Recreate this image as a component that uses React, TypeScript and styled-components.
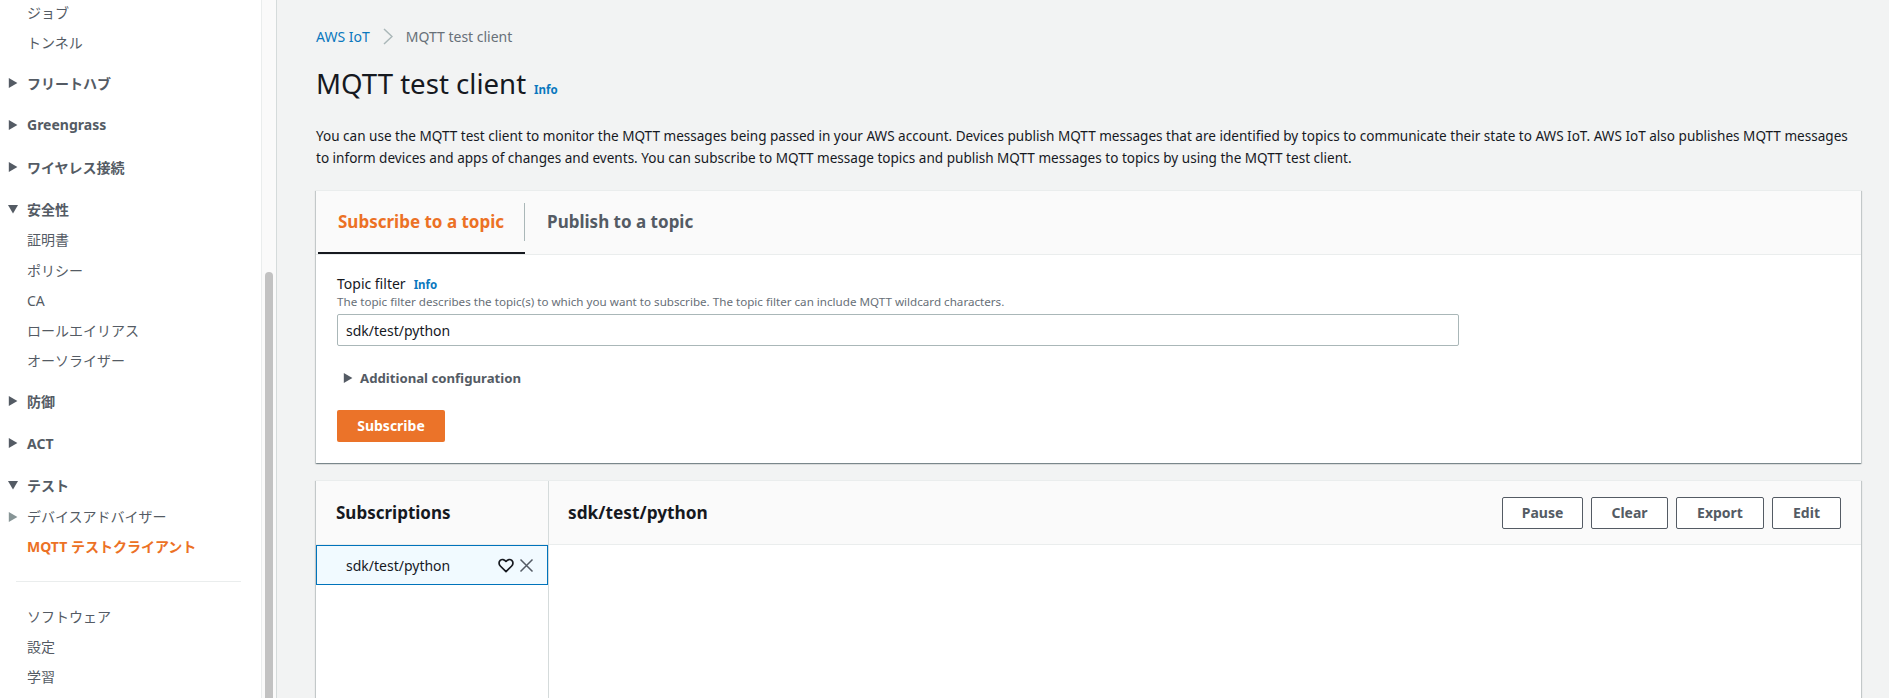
import React from "react";
import styled, { createGlobalStyle } from "styled-components";

const GlobalStyle = createGlobalStyle`
  html, body, #root {
    height: 100%;
  }
  body {
    margin: 0;
    overflow: hidden;
    background: #f2f3f3;
    color: #16191f;
    font-family: "Noto Sans", "Noto Sans CJK JP", sans-serif;
    font-size: 14px;
  }
`;

const Caret = ({ open, color = "#545b64" }: { open?: boolean; color?: string }) => (
  <CaretSvg viewBox="0 0 10 10">
    <path d={open ? "M0 1h10L5 9.400z" : "M.8 0v10L9.400 5z"} fill={color} />
  </CaretSvg>
);

const HeartIcon = () => (
  <svg width="16" height="15" viewBox="0 0 16 15" fill="none">
    <path
      d="M8 13.6 2.3 8C.6 6.300.7 3.800 2.200 2.400 3.800 1 6.300 1.200 8 3.400 9.700 1.200 12.200 1 13.800 2.400 15.300 3.800 15.400 6.300 13.700 8z"
      stroke="#16191f"
      strokeWidth="1.700"
      strokeLinejoin="round"
    />
  </svg>
);

const CloseIcon = () => (
  <svg width="15" height="15" viewBox="0 0 15 15" fill="none">
    <path d="M1.500 1.500 13.500 13.500M13.500 1.500 1.500 13.500" stroke="#545b64" strokeWidth="1.500" />
  </svg>
);

const ChevronIcon = () => (
  <svg width="10" height="17" viewBox="0 0 10 17" fill="none">
    <path d="M1 1l8 7.500-8 7.500" stroke="#aab7b8" strokeWidth="1.500" />
  </svg>
);

const App = () => {
  return (
    <>
      <GlobalStyle />
      <Page>
        <Sidebar>
          <NavList>
            <NavItem>ジョブ</NavItem>
            <NavItem>トンネル</NavItem>
            <NavSection>
              <Caret />
              フリートハブ
            </NavSection>
            <NavSection>
              <Caret />
              Greengrass
            </NavSection>
            <NavSection>
              <Caret />
              ワイヤレス接続
            </NavSection>
            <NavSection>
              <Caret open />
              安全性
            </NavSection>
            <NavItem>証明書</NavItem>
            <NavItem>ポリシー</NavItem>
            <NavItem>CA</NavItem>
            <NavItem>ロールエイリアス</NavItem>
            <NavItem>オーソライザー</NavItem>
            <NavSection>
              <Caret />
              防御
            </NavSection>
            <NavSection>
              <Caret />
              ACT
            </NavSection>
            <NavSection>
              <Caret open />
              テスト
            </NavSection>
            <NavItem>
              <Caret color="#879596" />
              デバイスアドバイザー
            </NavItem>
            <NavItem $active>MQTT テストクライアント</NavItem>
            <NavDivider />
            <NavItem>ソフトウェア</NavItem>
            <NavItem>設定</NavItem>
            <NavItem>学習</NavItem>
          </NavList>
        </Sidebar>
        <ScrollTrack>
          <ScrollThumb />
        </ScrollTrack>
        <Main>
          <Breadcrumbs>
            <CrumbLink>AWS IoT</CrumbLink>
            <ChevronIcon />
            <span>MQTT test client</span>
          </Breadcrumbs>
          <TitleRow>
            <Title>MQTT test client</Title>
            <InfoLink>Info</InfoLink>
          </TitleRow>
          <Description>
            You can use the MQTT test client to monitor the MQTT messages being passed in your AWS
            account. Devices publish MQTT messages that are identified by topics to communicate their
            state to AWS IoT. AWS IoT also publishes MQTT messages to inform devices and apps of
            changes and events. You can subscribe to MQTT message topics and publish MQTT messages to
            topics by using the MQTT test client.
          </Description>

          <Card>
            <TabBar>
              <Tab $active>Subscribe to a topic</Tab>
              <Tab>Publish to a topic</Tab>
            </TabBar>
            <FormBody>
              <LabelRow>
                <FieldLabel>Topic filter</FieldLabel>
                <InfoLink>Info</InfoLink>
              </LabelRow>
              <Hint>
                The topic filter describes the topic(s) to which you want to subscribe. The topic
                filter can include MQTT wildcard characters.
              </Hint>
              <TopicInput defaultValue="sdk/test/python" />
              <Expander>
                <Caret />
                Additional configuration
              </Expander>
              <PrimaryButton>Subscribe</PrimaryButton>
            </FormBody>
          </Card>

          <ResultCard>
            <SubscriptionsPane>
              <PaneHeader>
                <PaneTitle>Subscriptions</PaneTitle>
              </PaneHeader>
              <SubscriptionRow>
                <SubscriptionName>sdk/test/python</SubscriptionName>
                <HeartIcon />
                <CloseIcon />
              </SubscriptionRow>
            </SubscriptionsPane>
            <MessagesPane>
              <PaneHeader>
                <PaneTitle>sdk/test/python</PaneTitle>
                <ButtonRow>
                  <OutlineButton $width={81}>Pause</OutlineButton>
                  <OutlineButton $width={77}>Clear</OutlineButton>
                  <OutlineButton $width={88}>Export</OutlineButton>
                  <OutlineButton $width={69}>Edit</OutlineButton>
                </ButtonRow>
              </PaneHeader>
            </MessagesPane>
          </ResultCard>
        </Main>
      </Page>
    </>
  );
};

export default App;

const Page = styled.div`
  display: flex;
  height: 100%;
  overflow: hidden;
`;

const Sidebar = styled.nav`
  width: 261px;
  flex-shrink: 0;
  background: #fff;
  overflow: hidden;
`;

const NavList = styled.div`
  display: flex;
  flex-direction: column;
  margin-top: -2.400px;
`;

const CaretSvg = styled.svg`
  width: 10px;
  height: 10px;
  flex-shrink: 0;
`;

const NavItem = styled.div<{ $active?: boolean }>`
  position: relative;
  height: 30.200px;
  line-height: 30px;
  padding-left: 27px;
  color: ${(props) => (props.$active ? "#ec7125" : "#545b64")};
  font-weight: ${(props) => (props.$active ? 700 : 400)};

  ${CaretSvg} {
    position: absolute;
    left: 8px;
    top: 10px;
  }
`;

const NavSection = styled.div`
  display: flex;
  align-items: center;
  gap: 9px;
  height: 30.200px;
  margin-top: 11.800px;
  padding-left: 8px;
  color: #545b64;
  font-weight: 700;

  ${NavItem} + & {
    margin-top: 9.800px;
  }

  & + ${NavItem} {
    margin-top: 1.500px;
  }
`;

const NavDivider = styled.div`
  height: 1px;
  margin: 18.500px 20px 20px 16px;
  background: #eaeded;
`;

const ScrollTrack = styled.div`
  width: 16px;
  flex-shrink: 0;
  display: flex;
  justify-content: center;
  padding-top: 272px;
  box-sizing: border-box;
  background: #fafafa;
  border-left: 1px solid #eaeded;
  border-right: 1px solid #d5dbdb;
`;

const ScrollThumb = styled.div`
  width: 8px;
  height: 100%;
  background: #c2c2c2;
  border-radius: 4px 4px 0 0;
`;

const Main = styled.main`
  flex: 1;
  min-width: 0;
  padding: 26px 28px 0 39px;
`;

const Breadcrumbs = styled.div`
  display: flex;
  align-items: center;
  gap: 13px;
  height: 20px;
  color: #687078;
`;

const CrumbLink = styled.span`
  color: #0a78be;
`;

const TitleRow = styled.div`
  display: flex;
  align-items: baseline;
  gap: 8px;
  margin-top: 15px;
`;

const Title = styled.h1`
  margin: 0;
  font-size: 27.600px;
  line-height: 44px;
  font-weight: 400;
`;

const InfoLink = styled.span`
  color: #0a78be;
  font-size: 11.500px;
  font-weight: 700;
`;

const Description = styled.p`
  max-width: 1540px;
  margin: 20px 0 21px;
  font-size: 13.560px;
  line-height: 22px;
  color: #16191f;
`;

const Card = styled.section`
  background: #fff;
  border-top: 1px solid #eaeded;
  box-shadow: 0 1px 1px 0 rgba(0, 28, 36, 0.3), 1px 1px 1px 0 rgba(0, 28, 36, 0.15),
    -1px 1px 1px 0 rgba(0, 28, 36, 0.15);
`;

const TabBar = styled.div`
  display: flex;
  gap: 2px;
  height: 63px;
  padding-left: 2px;
  background: #fafafa;
  border-bottom: 1px solid #eaeded;
`;

const Tab = styled.div<{ $active?: boolean }>`
  position: relative;
  display: flex;
  align-items: center;
  padding: 0 21px 2px 20px;
  height: 100%;
  box-sizing: border-box;
  font-size: 17px;
  font-weight: 700;
  color: ${(props) => (props.$active ? "#ec7125" : "#545b64")};
  box-shadow: ${(props) => (props.$active ? "inset 0 -2px 0 #16191f" : "none")};

  &::after {
    content: "";
    display: ${(props) => (props.$active ? "block" : "none")};
    position: absolute;
    right: 0;
    top: 12px;
    bottom: 13px;
    width: 1px;
    background: #aab7b8;
  }
`;

const FormBody = styled.div`
  display: flex;
  flex-direction: column;
  align-items: flex-start;
  padding: 19px 21px 21.500px;
`;

const LabelRow = styled.div`
  display: flex;
  align-items: baseline;
  gap: 8px;
  height: 20px;
`;

const FieldLabel = styled.label`
  color: #16191f;
`;

const Hint = styled.div`
  font-size: 11.630px;
  line-height: 16px;
  color: #687078;
`;

const TopicInput = styled.input`
  box-sizing: border-box;
  width: 1122px;
  height: 32px;
  margin-top: 4px;
  padding: 0 8px;
  border: 1px solid #aab7b8;
  border-radius: 2px;
  outline: none;
  font: inherit;
  color: #16191f;
`;

const Expander = styled.div`
  display: flex;
  align-items: center;
  gap: 7px;
  height: 20px;
  margin-top: 22px;
  padding-left: 6px;
  color: #545b64;
  font-size: 13.200px;
  font-weight: 700;
`;

const PrimaryButton = styled.button`
  width: 108px;
  height: 32px;
  margin-top: 21.500px;
  padding: 0;
  border: none;
  border-radius: 2px;
  background: #eb7329;
  color: #fff;
  font: inherit;
  font-weight: 700;
`;

const ResultCard = styled(Card)`
  display: flex;
  height: 300px;
  margin-top: 17px;
`;

const SubscriptionsPane = styled.div`
  width: 232px;
  flex-shrink: 0;
  border-right: 1px solid #d5dbdb;
`;

const PaneHeader = styled.div`
  display: flex;
  align-items: center;
  justify-content: space-between;
  height: 64px;
  padding: 0 20px;
  box-sizing: border-box;
  background: #fafafa;
  border-bottom: 1px solid #eaeded;
`;

const PaneTitle = styled.h2`
  margin: 0;
  font-size: 17px;
  font-weight: 700;
  color: #16191f;
`;

const MessagesPane = styled.div`
  flex: 1;
  min-width: 0;

  ${PaneHeader} {
    padding-left: 19px;
  }

  ${PaneTitle} {
    font-size: 17.300px;
  }
`;

const ButtonRow = styled.div`
  display: flex;
  gap: 8px;
`;

const OutlineButton = styled.button<{ $width: number }>`
  width: ${(props) => props.$width}px;
  height: 32px;
  padding: 0;
  border: 1px solid #545b64;
  border-radius: 2px;
  background: #fff;
  color: #545b64;
  font: inherit;
  font-weight: 700;
`;

const SubscriptionRow = styled.div`
  display: flex;
  align-items: center;
  gap: 5px;
  height: 40px;
  box-sizing: border-box;
  padding: 0 13px 0 29px;
  background: #f1faff;
  border: 1px solid #0073bb;
`;

const SubscriptionName = styled.span`
  flex: 1;
`;
